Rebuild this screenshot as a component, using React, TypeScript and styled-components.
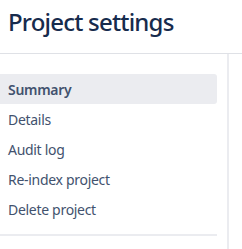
import React from "react";
import styled, { createGlobalStyle } from "styled-components";

const GlobalStyle = createGlobalStyle`
  html, body {
    margin: 0;
    padding: 0;
    background: #ffffff;
  }
  body {
    font-family: "Noto Sans", "Open Sans", sans-serif;
    overflow: hidden;
  }
`;

const Page = styled.div`
  width: 242px;
  height: 249px;
  display: flex;
  flex-direction: column;
`;

const Header = styled.header`
  height: 54px;
  box-sizing: border-box;
  padding: 5px 0 0 8px;
  border-bottom: 1px solid #dfe1e6;
  display: flex;
  align-items: flex-start;
`;

const Title = styled.h1`
  margin: 0;
  font-size: 24px;
  line-height: 34px;
  font-weight: 500;
  color: #172b4d;
  letter-spacing: -0.8px;
`;

const Body = styled.div`
  flex: 1;
  display: flex;
`;

const Sidebar = styled.aside`
  width: 229px;
  border-right: 2px solid #ebecf0;
  padding: 20px 10px 0 0;
  box-sizing: border-box;
`;

const Nav = styled.nav`
  display: flex;
  flex-direction: column;
`;

const NavItem = styled.a<{ $active?: boolean }>`
  height: 30px;
  display: flex;
  align-items: center;
  padding-left: 8px;
  font-size: 14px;
  letter-spacing: -0.3px;
  color: #42526e;
  font-weight: ${(p) => (p.$active ? 600 : 400)};
  background: ${(p) => (p.$active ? "#ebecf0" : "transparent")};
  border-radius: 0 3px 3px 0;
  text-decoration: none;
  cursor: pointer;
`;

const Divider = styled.hr`
  margin: 10px 0 0;
  border: none;
  border-top: 2px solid #ebecf0;
`;

const items = ["Summary", "Details", "Audit log", "Re-index project", "Delete project"];

export default function App() {
  return (
    <Page>
      <GlobalStyle />
      <Header>
        <Title>Project settings</Title>
      </Header>
      <Body>
        <Sidebar>
          <Nav>
            {items.map((item, i) => (
              <NavItem key={item} $active={i === 0}>
                {item}
              </NavItem>
            ))}
          </Nav>
          <Divider />
        </Sidebar>
      </Body>
    </Page>
  );
}
